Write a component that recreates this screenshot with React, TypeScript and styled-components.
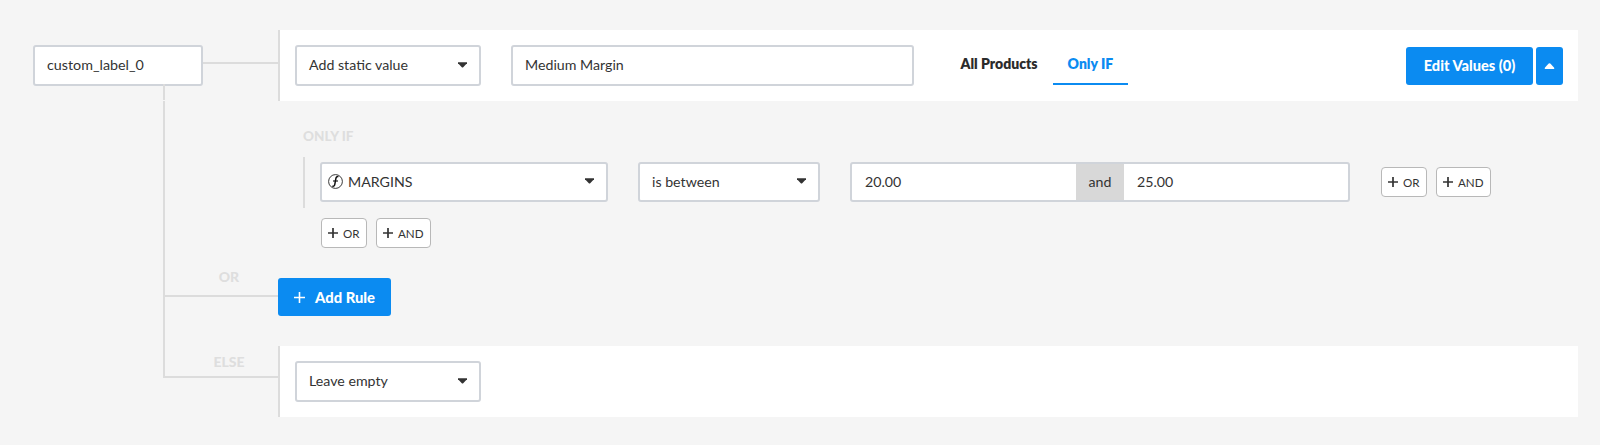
import React from "react";
import styled, { createGlobalStyle } from "styled-components";

const Global = createGlobalStyle`
  html, body { margin: 0; padding: 0; background: #f5f5f5; }
  * { box-sizing: border-box; }
  body { font-family: "Lato", "Liberation Sans", sans-serif; color: #333; }
`;

const Page = styled.div`
  width: 1600px;
  height: 445px;
  padding: 30px 22px 0 33px;
  background: #f5f5f5;
  overflow: hidden;
`;

const Row = styled.div`
  display: grid;
  grid-template-columns: 245px 1fr;
`;

const NodeCell = styled.div`
  display: flex;
  align-items: center;
`;

const Node = styled.div`
  position: relative;
  flex: 0 0 170px;
  height: 41px;
  padding: 0 0 2px 12px;
  display: flex;
  align-items: center;
  background: #fff;
  border: 2px solid #d0d4da;
  border-radius: 3px;
  font-size: 14.3px;
  &::after {
    content: "";
    position: absolute;
    top: 100%;
    left: 128px;
    width: 2px;
    height: 16px;
    background: #dcdcdc;
  }
`;

const Connector = styled.div`
  flex: 1;
  height: 2px;
  margin-bottom: 5px;
  background: #dcdcdc;
`;

const Panel = styled.div`
  height: 71px;
  padding: 0 15px;
  display: flex;
  align-items: center;
  background: #fff;
  border-left: 2px solid #dcdcdc;
`;

const Field = styled.div<{ $w: number; $tight?: boolean }>`
  flex: 0 0 ${(p) => p.$w}px;
  height: 41px;
  padding: ${(p) => (p.$tight ? "0 12px 2px 6px" : "0 12px 2px 12px")};
  display: flex;
  align-items: center;
  justify-content: space-between;
  background: #fff;
  border: 2px solid #d0d4da;
  border-radius: 3px;
  font-size: 14.2px;
`;

const FieldLabel = styled.span`
  display: flex;
  align-items: center;
  gap: 5px;
`;

const ValueInput = styled(Field)`
  margin-left: 30px;
`;

const Tabs = styled.div`
  display: flex;
  margin-left: 31.5px;
  height: 38px;
`;

const Tab = styled.div<{ $active?: boolean }>`
  padding: 0 15px 3px;
  display: flex;
  align-items: center;
  font-size: 14px;
  font-weight: 800;
  color: ${(p) => (p.$active ? "#0b8bf1" : "#2b2b2b")};
  border-bottom: 2px solid ${(p) => (p.$active ? "#0b8bf1" : "transparent")};
`;

const Actions = styled.div`
  margin-left: auto;
  display: flex;
  gap: 3px;
`;

const BlueButton = styled.button`
  height: 38px;
  padding: 0;
  width: 127px;
  border: 0;
  border-radius: 3px;
  display: flex;
  align-items: center;
  justify-content: center;
  gap: 10px;
  background: #0b8bf1;
  color: #fff;
  font-family: inherit;
  font-size: 14.6px;
  font-weight: 900;
`;

const SquareButton = styled(BlueButton)`
  width: 27px;
`;

const Body = styled.div`
  padding: 25px 0 0 25px;
  height: 157px;
`;

const Section = styled.div`
  height: 20px;
  line-height: 20px;
  font-size: 13.5px;
  font-weight: 900;
  color: #dedede;
`;

const Group = styled.div`
  margin-top: 11px;
  height: 51px;
  padding: 0 0 1px 15px;
  display: flex;
  align-items: center;
  border-left: 2px solid #dcdcdc;
`;

const RuleField = styled(Field)<{ $after: number }>`
  height: 40px;
  margin-right: ${(p) => p.$after}px;
`;

const Range = styled.div`
  flex: 0 0 500px;
  height: 40px;
  margin-right: 31px;
  display: flex;
  background: #fff;
  border: 2px solid #d0d4da;
  border-radius: 3px;
  font-size: 14.2px;
`;

const RangeValue = styled.div`
  flex: 1;
  padding: 0 0 2px 13px;
  display: flex;
  align-items: center;
`;

const RangeJoin = styled.div`
  flex: 0 0 48px;
  padding-bottom: 2px;
  display: flex;
  align-items: center;
  justify-content: center;
  background: #d8d8d8;
`;

const MiniGroup = styled.div`
  display: flex;
  gap: 9px;
`;

const BottomMini = styled(MiniGroup)`
  margin: 10px 0 0 18px;
`;

const Mini = styled.button<{ $w: number }>`
  width: ${(p) => p.$w}px;
  height: 30px;
  padding: 0 0 0 6px;
  display: flex;
  align-items: center;
  gap: 5px;
  background: #fff;
  border: 1px solid #b8b8b8;
  border-radius: 4px;
  font-family: inherit;
  font-size: 11.6px;
  color: #333;
`;

const Branch = styled.div<{ $h?: number }>`
  margin-left: 130px;
  border-left: 2px solid #dcdcdc;
  height: ${(p) => (p.$h ? `${p.$h}px` : "auto")};
`;

const BranchLabel = styled.div<{ $h: number }>`
  height: ${(p) => p.$h}px;
  padding-left: 15px;
  display: flex;
  align-items: center;
  justify-content: center;
  border-bottom: 2px solid #dcdcdc;
  font-size: 14px;
  font-weight: 900;
  color: #dedede;
`;

const OrRow = styled(Row)`
  height: 88px;
`;

const AddRule = styled(BlueButton)`
  margin: 20px 0 0 0;
  width: 113px;
  font-size: 14.8px;
`;

const Caret = ({ up }: { up?: boolean }) => (
  <svg width="9" height="6" viewBox="0 0 9 6" style={up ? { transform: "rotate(180deg) scale(1.1)" } : undefined}>
    <path d="M0 0.2h9v1L5.2 5.2a1 1 0 0 1-1.4 0L0 1.2z" fill={up ? "#fff" : "#333"} />
  </svg>
);

const Plus = ({ size, color, w }: { size: number; color: string; w: number }) => (
  <svg width={size} height={size} viewBox={`0 0 ${size} ${size}`}>
    <path d={`M${size / 2} 0V${size}M0 ${size / 2}H${size}`} stroke={color} strokeWidth={w} fill="none" />
  </svg>
);

const FnIcon = () => (
  <svg width="15" height="15" viewBox="0 0 15 15" fill="none">
    <circle cx="7.5" cy="7.5" r="6.9" stroke="#222" strokeWidth="0.9" />
    <path d="M10.4 2.8C9 2.2 8.2 2.9 7.9 4.4L6.8 10.4C6.5 11.9 5.7 12.6 4.4 12" stroke="#111" strokeWidth="1.5" />
    <path d="M5 7H10" stroke="#111" strokeWidth="1.1" />
  </svg>
);

const MiniPair = () => (
  <>
    <Mini $w={46}><Plus size={10} color="#333" w={1.7} />OR</Mini>
    <Mini $w={55}><Plus size={10} color="#333" w={1.7} />AND</Mini>
  </>
);

export default function App() {
  return (
    <Page>
      <Global />
      <Row>
        <NodeCell>
          <Node>custom_label_0</Node>
          <Connector />
        </NodeCell>
        <Panel>
          <Field $w={186}>Add static value<Caret /></Field>
          <ValueInput $w={403}>Medium Margin</ValueInput>
          <Tabs>
            <Tab>All Products</Tab>
            <Tab $active>Only IF</Tab>
          </Tabs>
          <Actions>
            <BlueButton>Edit Values (0)</BlueButton>
            <SquareButton aria-label="Collapse"><Caret up /></SquareButton>
          </Actions>
        </Panel>
      </Row>
      <Row>
        <Branch />
        <Body>
          <Section>ONLY IF</Section>
          <Group>
            <RuleField $w={288} $after={30} $tight><FieldLabel><FnIcon />MARGINS</FieldLabel><Caret /></RuleField>
            <RuleField $w={182} $after={30}>is between<Caret /></RuleField>
            <Range>
              <RangeValue>20.00</RangeValue>
              <RangeJoin>and</RangeJoin>
              <RangeValue>25.00</RangeValue>
            </Range>
            <MiniGroup><MiniPair /></MiniGroup>
          </Group>
          <BottomMini><MiniPair /></BottomMini>
        </Body>
      </Row>
      <OrRow>
        <Branch>
          <BranchLabel $h={39}>OR</BranchLabel>
        </Branch>
        <div>
          <AddRule><Plus size={11} color="#fff" w={1.6} />Add Rule</AddRule>
        </div>
      </OrRow>
      <Row>
        <Branch $h={32}>
          <BranchLabel $h={32}>ELSE</BranchLabel>
        </Branch>
        <Panel>
          <Field $w={186}>Leave empty<Caret /></Field>
        </Panel>
      </Row>
    </Page>
  );
}
